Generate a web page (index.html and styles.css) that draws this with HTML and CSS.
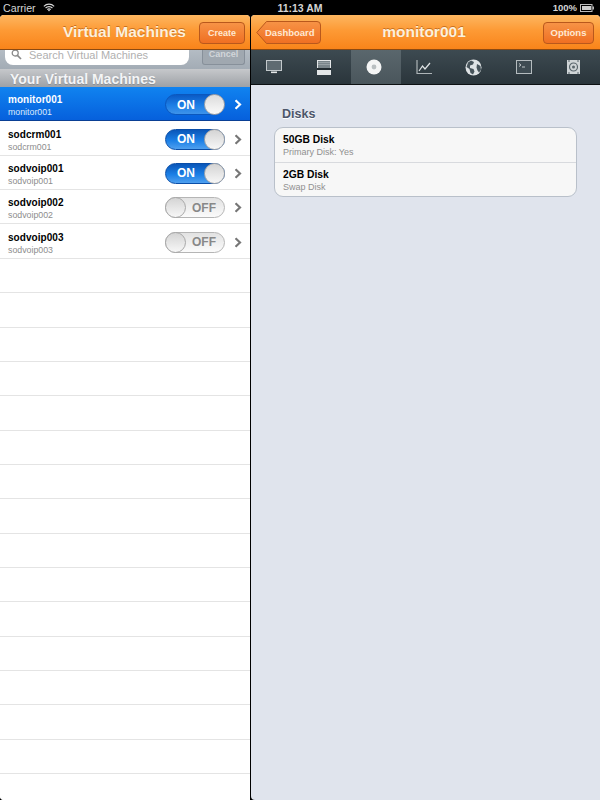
FILE: index.html
```html
<!DOCTYPE html>
<html lang="en">
<head>
  <meta charset="UTF-8" />
  <title>Virtual Machines</title>
  <link rel="stylesheet" href="styles.css">
</head>
<body>
  <!-- Status bar -->
  <div class="status">
    <div class="status-left">
      <span>Carrier</span>
      <svg width="12" height="9" viewBox="0 0 14 10"><path d="M1 3.6a8.5 8.5 0 0 1 12 0M3 5.6a5.6 5.6 0 0 1 8 0M5 7.4a2.8 2.8 0 0 1 4 0" fill="none" stroke="#d8d8d8" stroke-width="1.3"/><path d="M5.8 8.3 7 9.6l1.2-1.3a1.7 1.7 0 0 0-2.4 0z" fill="#d8d8d8"/></svg>
    </div>
    <div class="status-time">11:13 AM</div>
    <div class="status-right">
      <span>100%</span>
      <svg width="14" height="8" viewBox="0 0 14 8"><rect x="0.5" y="0.500" width="11.500" height="7" fill="none" stroke="#bbb"/><rect x="2" y="2" width="9" height="4" fill="#ccc"/><rect x="12.500" y="2.500" width="1.500" height="3" fill="#bbb"/></svg>
    </div>
  </div>

  <div class="panes">
    <!-- Left pane -->
    <div class="pane-left">
      <div class="navbar">
        <div class="nav-title nav-title-left">Virtual Machines</div>
        <div class="btn">Create</div>
      </div>
      <div class="search-row">
        <div class="search-input">
          <svg width="11" height="10" viewBox="0 0 11 10"><circle cx="4.200" cy="3" r="3" fill="none" stroke="#8a8a8a" stroke-width="1.300"/><path d="M6.400 5.400 10 9" stroke="#8a8a8a" stroke-width="1.700"/></svg>
          <span>Search Virtual Machines</span>
        </div>
        <div class="search-cancel">Cancel</div>
      </div>
      <div class="section-head">Your Virtual Machines</div>
      <div class="vm-list">
        <div class="vm-row selected">
          <div class="vm-text"><div class="vm-name">monitor001</div><div class="vm-sub">monitor001</div></div>
          <div class="toggle on"><span class="toggle-label">ON</span><span class="knob"></span></div>
          <svg class="chev" width="8" height="11" viewBox="0 0 8 11"><path d="M1.5 1.2 6 5.5 1.5 9.8" fill="none" stroke="#fff" stroke-width="2.2"/></svg>
        </div>
        <div class="vm-row">
          <div class="vm-text"><div class="vm-name">sodcrm001</div><div class="vm-sub">sodcrm001</div></div>
          <div class="toggle on"><span class="toggle-label">ON</span><span class="knob"></span></div>
          <svg class="chev" width="8" height="11" viewBox="0 0 8 11"><path d="M1.5 1.2 6 5.5 1.5 9.8" fill="none" stroke="#777" stroke-width="2.2"/></svg>
        </div>
        <div class="vm-row">
          <div class="vm-text"><div class="vm-name">sodvoip001</div><div class="vm-sub">sodvoip001</div></div>
          <div class="toggle on"><span class="toggle-label">ON</span><span class="knob"></span></div>
          <svg class="chev" width="8" height="11" viewBox="0 0 8 11"><path d="M1.5 1.2 6 5.5 1.5 9.8" fill="none" stroke="#777" stroke-width="2.2"/></svg>
        </div>
        <div class="vm-row">
          <div class="vm-text"><div class="vm-name">sodvoip002</div><div class="vm-sub">sodvoip002</div></div>
          <div class="toggle off"><span class="knob"></span><span class="toggle-label">OFF</span></div>
          <svg class="chev" width="8" height="11" viewBox="0 0 8 11"><path d="M1.5 1.2 6 5.5 1.5 9.8" fill="none" stroke="#777" stroke-width="2.2"/></svg>
        </div>
        <div class="vm-row">
          <div class="vm-text"><div class="vm-name">sodvoip003</div><div class="vm-sub">sodvoip003</div></div>
          <div class="toggle off"><span class="knob"></span><span class="toggle-label">OFF</span></div>
          <svg class="chev" width="8" height="11" viewBox="0 0 8 11"><path d="M1.5 1.2 6 5.5 1.5 9.8" fill="none" stroke="#777" stroke-width="2.2"/></svg>
        </div>
        <div class="vm-row"></div><div class="vm-row"></div><div class="vm-row"></div>
        <div class="vm-row"></div><div class="vm-row"></div><div class="vm-row"></div>
        <div class="vm-row"></div><div class="vm-row"></div><div class="vm-row"></div>
        <div class="vm-row"></div><div class="vm-row"></div><div class="vm-row"></div>
        <div class="vm-row"></div><div class="vm-row"></div><div class="vm-row"></div>
        <div class="vm-row"></div>
      </div>
    </div>

    <!-- Right pane -->
    <div class="pane-right">
      <div class="navbar navbar-right">
        <svg class="back-btn" width="65" height="23" viewBox="0 0 65 23"><defs><linearGradient id="backfill" x1="0" y1="0" x2="0" y2="1"><stop offset="0" stop-color="#f79346"/><stop offset="1" stop-color="#ef6f22"/></linearGradient></defs><path d="M10.5 .5H61a3.5 3.5 0 0 1 3.5 3.5v15a3.5 3.5 0 0 1-3.5 3.5H10.5L.8 11.5z" fill="url(#backfill)" stroke="#b9581c"/></svg>
        <div class="back-label">Dashboard</div>
        <div class="nav-title">monitor001</div>
        <div class="btn">Options</div>
      </div>
      <div class="tabs">
        <div class="tab">
          <svg width="16" height="14" viewBox="0 0 16 14"><rect x="0.5" y="0.5" width="15" height="10" fill="#5f6b71" stroke="#c3c9cc"/><rect x="5" y="11.500" width="6" height="1.600" fill="#e4e7e8"/></svg>
        </div>
        <div class="tab">
          <svg width="14" height="15" viewBox="0 0 14 15"><rect width="14" height="15" fill="#e4e7e8"/><rect x="1" y="1" width="12" height="7" fill="#7a858a"/><path d="M1 2.500h12M1 4.500h12" stroke="#98a1a5"/><rect x="0" y="8" width="14" height="2" fill="#222b30"/></svg>
        </div>
        <div class="tab active">
          <svg width="16" height="16" viewBox="0 0 16 16"><circle cx="8" cy="8" r="7.5" fill="#f4f5f5"/><circle cx="8" cy="8" r="2.4" fill="#b9bfc1"/></svg>
        </div>
        <div class="tab">
          <svg width="16" height="15" viewBox="0 0 16 15"><path d="M1 0v13.5h15" fill="none" stroke="#aeb5b8" stroke-width="1.2"/><path d="M3 11l3.5-5 2.5 3 5-6" fill="none" stroke="#dfe3e5" stroke-width="1.2"/></svg>
        </div>
        <div class="tab">
          <svg width="17" height="17" viewBox="0 0 17 17"><circle cx="8.5" cy="8.5" r="8" fill="#dfe3e5"/><path d="M6 1.5 9 3 8 5.5 5 6.5 5 9l3.5 1 1 2.5L8 15.500 5.500 14 4.500 10 1.500 8 3 3.500zM12 5l3.500 2 .5 4-2 2.500-1.500-2-1-3z" fill="#47545b"/></svg>
        </div>
        <div class="tab">
          <svg width="16" height="14" viewBox="0 0 16 14"><rect x="0.5" y="0.5" width="15" height="13" fill="#3e4b52" stroke="#b5bcbf"/><path d="M3 3.500 5 5 3 6.500" fill="none" stroke="#e0e3e5" stroke-width=".8"/><path d="M6 7h3" stroke="#e0e3e5" stroke-width=".8"/></svg>
        </div>
        <div class="tab">
          <svg width="13" height="14" viewBox="0 0 13 14"><rect width="13" height="14" fill="#cfd4d6"/><circle cx="6.500" cy="7" r="4" fill="none" stroke="#5b676d" stroke-width="1.200"/><circle cx="6.500" cy="7" r="1.500" fill="#5b676d"/><path d="M1 1h2M10 1h2M1 13h2M10 13h2" stroke="#5b676d"/></svg>
        </div>
      </div>
      <div class="content">
        <div class="group-title">Disks</div>
        <div class="group">
          <div class="group-row"><div class="disk-name">50GB Disk</div><div class="disk-sub">Primary Disk: Yes</div></div>
          <div class="group-row"><div class="disk-name">2GB Disk</div><div class="disk-sub">Swap Disk</div></div>
        </div>
      </div>
    </div>
  </div>
</body>
</html>
```

FILE: styles.css
```css
* {
  box-sizing: border-box;
}

html, body {
  margin: 0;
  height: 100%;
}

body {
  width: 600px;
  height: 800px;
  overflow: hidden;
  background: #000;
  font-family: "Liberation Sans", Arial, sans-serif;
}

/* Status bar */
.status {
  height: 15px;
  display: grid;
  grid-template-columns: 1fr auto 1fr;
  align-items: center;
  padding: 0 3px;
  color: #d4d4d4;
  font-size: 10.700px;
}

.status-left {
  display: flex;
  align-items: center;
  gap: 7px;
}

.status-time {
  font-size: 10.500px;
  font-weight: bold;
}

.status-right {
  display: flex;
  align-items: center;
  justify-content: flex-end;
  gap: 3px;
  margin-right: 3px;
  font-size: 9.500px;
  font-weight: bold;
}

.panes {
  height: 785px;
  display: flex;
  gap: 1px;
}

.pane-left {
  width: 250px;
  display: flex;
  flex-direction: column;
  overflow: hidden;
  background: #fff;
  border-radius: 4px 4px 0 4px;
}

.pane-right {
  width: 349px;
  flex: 1;
  display: flex;
  flex-direction: column;
  overflow: hidden;
  background: #e0e4ed;
  border-radius: 4px 4px 0 4px;
}

/* Orange nav bars */
.navbar {
  position: relative;
  z-index: 1;
  height: 35px;
  flex: none;
  display: flex;
  align-items: center;
  justify-content: flex-end;
  padding: 1px 5px 0;
  background: linear-gradient(#fdb660, #fd9a35 45%, #f9841a);
  border-bottom: 1px solid #8c4a12;
}

.navbar-right {
  padding-right: 6px;
}

.nav-title {
  position: absolute;
  left: 0;
  right: 3px;
  top: 8px;
  text-align: center;
  color: #fdf0dc;
  font-size: 15.500px;
  font-weight: bold;
  text-shadow: 0 -1px 0 #c9701f;
}

.nav-title-left {
  left: 63px;
  right: auto;
}

.btn {
  position: relative;
  height: 22px;
  width: 46px;
  display: flex;
  align-items: center;
  justify-content: center;
  color: #ffe9d3;
  font-size: 9px;
  font-weight: bold;
  background: linear-gradient(#f79346, #ef6f22);
  border: 1px solid #b9581c;
  border-radius: 4px;
}

.navbar-right .btn {
  width: 51px;
  font-size: 9.500px;
}

.back-btn {
  position: absolute;
  left: 5px;
  top: 6px;
}

.back-label {
  position: absolute;
  left: 14px;
  top: 12px;
  color: #ffe9d3;
  font-size: 9.500px;
  font-weight: bold;
}

/* Search */
.search-row {
  height: 19px;
  flex: none;
  display: flex;
  gap: 13px;
  padding: 0 5px;
  overflow: hidden;
  background: linear-gradient(#b4bcc4, #a3acb5);
}

.search-input {
  width: 185px;
  height: 15px;
  display: flex;
  align-items: center;
  gap: 7px;
  padding: 0 0 6px 6px;
  color: #b0b0b0;
  font-size: 11px;
  background: #fff;
  border-radius: 0 0 8px 8px;
}

.search-cancel {
  width: 43px;
  height: 15px;
  line-height: 8px;
  text-align: center;
  color: #d2d6da;
  font-size: 9px;
  font-weight: bold;
  background: #a0a8b0;
  border: 1px solid #87909a;
  border-top: 0;
  border-radius: 0 0 3px 3px;
}

.section-head {
  height: 18px;
  flex: none;
  padding: 2px 0 0 10px;
  color: #f4f5f6;
  font-size: 14px;
  font-weight: bold;
  background: linear-gradient(#c6c8cb, #9da1a6);
  text-shadow: 0 1px 0 #8b9096;
}

/* VM list */
.vm-row {
  height: 34.370px;
  display: flex;
  align-items: center;
  padding: 2px 8px 0;
  border-bottom: 1px solid #e4e4e4;
  background: #fff;
}

.vm-row.selected {
  background: linear-gradient(#1083f0, #0660dc);
  border-bottom-color: #0a3f94;
}

.vm-text {
  flex: 1;
  padding-top: 2px;
}

.vm-name {
  color: #000;
  font-size: 10px;
  font-weight: bold;
  line-height: 13px;
  letter-spacing: 0.050px;
}

.vm-sub {
  color: #8d8d8d;
  font-size: 8.800px;
  line-height: 11px;
  margin-top: 1px;
}

.selected .vm-name,
.selected .vm-sub {
  color: #fff;
}

.selected .vm-sub {
  color: #dbe9fb;
}

.toggle {
  width: 60px;
  height: 21px;
  display: flex;
  align-items: center;
  justify-content: space-between;
  border-radius: 11px;
  font-size: 12px;
  font-weight: bold;
}

.toggle.on {
  padding-left: 11px;
  color: #fff;
  background: linear-gradient(#0a56b8, #1b7fe6 55%, #4fa0ef);
  border: 1px solid #0a4ea8;
}

.toggle.off {
  padding-right: 8px;
  color: #888;
  background: linear-gradient(#e2e2e2, #fbfbfb);
  border: 1px solid #b5b5b5;
}

.selected .toggle.on {
  background: linear-gradient(#0a5ac6, #1d7fe6 55%, #3e93ea);
  border-color: #0b57bd;
}

.knob {
  width: 21px;
  height: 21px;
  margin: -1px;
  border-radius: 50%;
  background: linear-gradient(#d4d4d4, #f7f7f7);
  border: 1px solid #a8a8a8;
}

.selected .knob {
  background: linear-gradient(#dcdcdc, #fafafa);
}

.chev {
  margin-left: 9px;
}

/* Tabs */
.tabs {
  height: 35px;
  flex: none;
  display: grid;
  grid-template-columns: repeat(7, 1fr);
  background: linear-gradient(#3d4a51, #2a353b);
  border-bottom: 1px solid #0c1012;
}

.tab {
  display: flex;
  align-items: center;
  justify-content: center;
}

.tab svg {
  margin-right: 3px;
}

.tab.active {
  background: linear-gradient(#5a676d, #4a565c);
}

/* Detail content */
.content {
  padding: 21px 23px 0;
}

.group-title {
  margin-left: 8px;
  color: #4c566a;
  font-size: 12.500px;
  font-weight: bold;
  line-height: 16px;
  text-shadow: 0 1px 0 #fff;
}

.group {
  margin-top: 5px;
  background: #f7f7f7;
  border: 1px solid #b9c0ca;
  border-radius: 9px;
}

.group-row {
  height: 34px;
  padding: 5px 8px 0;
}

.group-row + .group-row {
  border-top: 1px solid #d8dade;
}

.disk-name {
  color: #000;
  font-size: 10.300px;
  font-weight: bold;
  line-height: 13px;
}

.disk-sub {
  color: #909090;
  font-size: 9px;
  line-height: 12px;
}
```
